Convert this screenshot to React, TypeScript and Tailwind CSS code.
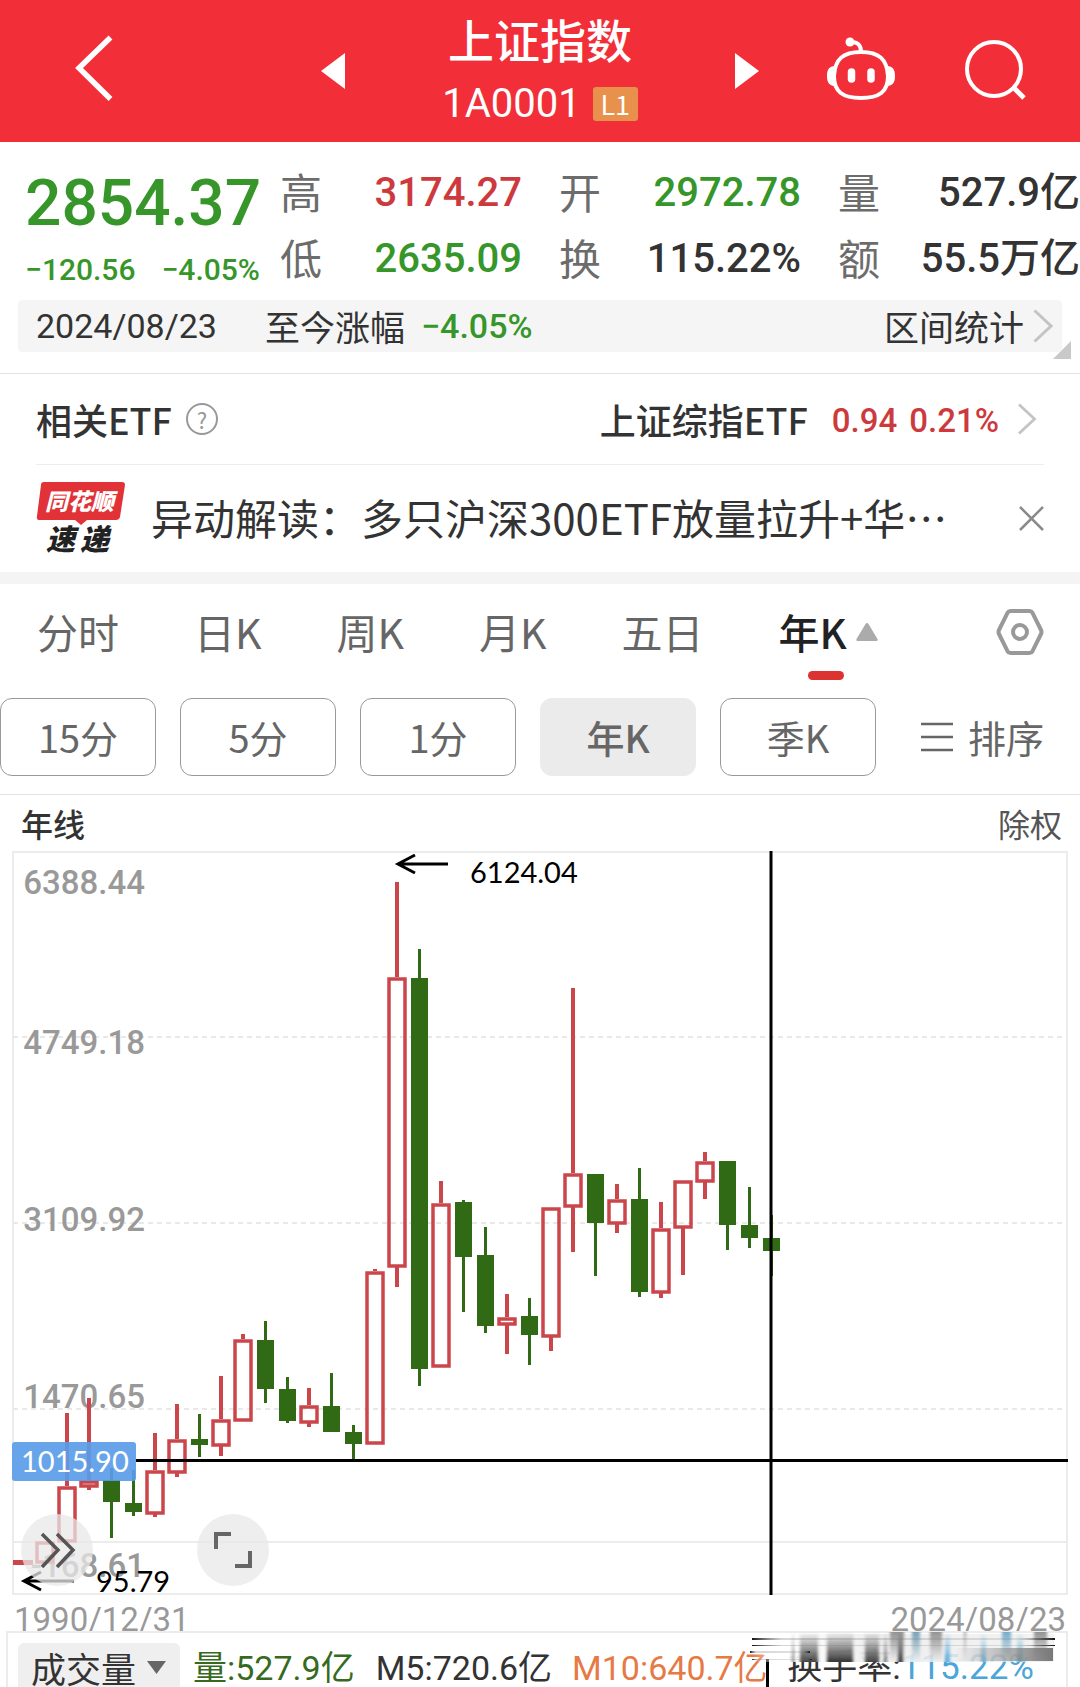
import React from 'react';

const CJK = "font-['Noto_Sans_CJK_SC',sans-serif]";
const NUM = "font-['Roboto','Noto_Sans_CJK_SC',sans-serif]";

type Candle = { up: boolean; high: number; top: number; bottom: number; low: number };

const up = (high: number, top: number, bottom: number, low: number): Candle => ({ up: true, high, top, bottom, low });
const down = (high: number, top: number, bottom: number, low: number): Candle => ({ up: false, high, top, bottom, low });

/* One candle per year, 1990 to 2024, in chart units. */
const candles: Candle[] = [
  up(1560, 1560, 1565, 1565),
  up(1541, 1541, 1563, 1563),
  up(1413, 1486, 1542, 1542),
  up(1398, 1480, 1487, 1490),
  down(1468, 1480, 1502, 1538),
  down(1470, 1503, 1512, 1516),
  up(1433, 1470, 1514, 1517),
  up(1404, 1439, 1473, 1477),
  down(1414, 1439, 1445, 1457),
  up(1376, 1419, 1446, 1456),
  up(1334, 1339, 1421, 1421),
  down(1321, 1340, 1389, 1403),
  down(1377, 1389, 1421, 1423),
  up(1388, 1405, 1423, 1427),
  down(1373, 1406, 1432, 1432),
  down(1425, 1432, 1444, 1459),
  up(1269, 1271, 1444, 1444),
  up(882, 977, 1267, 1287),
  down(949, 978, 1369, 1386),
  up(1181, 1203, 1367, 1367),
  down(1200, 1202, 1257, 1312),
  down(1227, 1255, 1326, 1333),
  up(1294, 1317, 1325, 1354),
  down(1298, 1316, 1335, 1365),
  up(1207, 1207, 1337, 1351),
  up(988, 1173, 1207, 1252),
  down(1174, 1174, 1223, 1276),
  up(1184, 1199, 1224, 1233),
  down(1168, 1199, 1292, 1297),
  up(1202, 1228, 1293, 1298),
  up(1180, 1180, 1228, 1275),
  up(1152, 1161, 1182, 1199),
  down(1161, 1161, 1225, 1250),
  down(1187, 1225, 1238, 1248),
  down(1215, 1238, 1251, 1276),
];

const RED = '#cb464b';
const GREEN = '#306a14';

function CandleShape({ candle, index }: { candle: Candle; index: number }) {
  const x = 23 + index * 22;
  const { high, top, bottom, low } = candle;
  if (!candle.up) {
    return (
      <g fill={GREEN}>
        <rect x={x - 1} y={high} width={3} height={low - high} />
        <rect x={x - 8} y={top} width={17} height={bottom - top} />
      </g>
    );
  }
  if (index === 0) return <rect x={13} y={top} width={20} height={bottom - top} fill={RED} />;
  return (
    <g>
      <rect x={x - 2} y={high} width={4} height={top - high} fill={RED} />
      <rect x={x - 2} y={bottom} width={4} height={low - bottom} fill={RED} />
      <rect
        x={x - 8}
        y={top + 2}
        width={16}
        height={Math.max(bottom - top - 3, 2)}
        fill="none"
        stroke={RED}
        strokeWidth={3.5}
      />
    </g>
  );
}

function Chevron({ className }: { className: string }) {
  return (
    <svg viewBox="0 0 20 34" className={className} fill="none" stroke="#c4c4c4" strokeWidth="3" aria-hidden="true">
      <path d="M1.5 1.5 18 17 1.5 32.5" />
    </svg>
  );
}

function Header() {
  return (
    <header className="relative flex h-[142px] items-center justify-center bg-[#f22f38] text-white">
      <button aria-label="返回" className="absolute top-[30px] left-[70px]">
        <svg width="48" height="74" viewBox="0 0 48 74" fill="none" stroke="#fff" strokeWidth="5.5">
          <path d="M40.500 7.500 9 38 40.500 69" />
        </svg>
      </button>
      <div className="flex items-center">
        <button aria-label="上一个">
          <svg width="24" height="36" viewBox="0 0 24 36" fill="#fff">
            <path d="M24 0v36L0 18z" />
          </svg>
        </button>
        <div className="flex w-[390px] flex-col items-center pt-px">
          <h1 className="text-[46px] leading-[60px] font-medium">上证指数</h1>
          <div className="mt-1 flex items-center gap-3">
            <span className={`${NUM} text-[40px] leading-[64px]`}>1A0001</span>
            <span className="flex h-[34px] w-[45px] items-center justify-center rounded-[3px] bg-[#e8914c] text-[27px] leading-[34px]">
              L1
            </span>
          </div>
        </div>
        <button aria-label="下一个">
          <svg width="24" height="36" viewBox="0 0 24 36" fill="#fff">
            <path d="M0 0v36l24-18z" />
          </svg>
        </button>
      </div>
      <div className="absolute top-[34px] right-[50px] flex gap-[66px]">
        <button aria-label="智能助手">
          <svg width="72" height="72" viewBox="0 0 72 72" fill="none" stroke="#fff" strokeWidth="4">
            <path d="M35 18c18 0 26 7 27 24 0 16-9 22-27 22S8 58 8 42c1-17 9-24 27-24z" />
            <path d="M35 18c0-7-3-10-10-10" />
            <circle cx="24" cy="8" r="4.500" fill="#fff" stroke="none" />
            <path d="M8 32c-6 1-7 5-7 10s1 9 7 10zM62 32c6 1 7 5 7 10s-1 9-7 10z" fill="#fff" stroke="none" />
            <path d="M25.500 38v7M45 38v7" strokeWidth="7.500" strokeLinecap="round" />
          </svg>
        </button>
        <button aria-label="搜索">
          <svg width="66" height="72" viewBox="0 0 66 72" fill="none" stroke="#fff" strokeWidth="4">
            <circle cx="30" cy="35" r="27" />
            <path d="M49 53 60 64" strokeWidth="5" />
          </svg>
        </button>
      </div>
    </header>
  );
}

const stats = [
  { label: '高', value: '3174.27', color: 'text-[#cd3a3d]' },
  { label: '开', value: '2972.78', color: 'text-[#36962a]' },
  { label: '量', value: '527.9亿', color: 'text-[#333]' },
  { label: '低', value: '2635.09', color: 'text-[#36962a]' },
  { label: '换', value: '115.22%', color: 'text-[#333]' },
  { label: '额', value: '55.5万亿', color: 'text-[#333]' },
];

function Quote() {
  return (
    <section className="border-b border-[#e2e2e2] pt-4 pb-[21px]">
      <div className="flex">
        <div className={`${NUM} w-[280px] shrink-0 pl-[25px] font-medium text-[#36962a]`}>
          <div className="text-[64px] leading-[92px]">2854.37</div>
          <div className="flex gap-[26px] text-[30px] leading-[40px] whitespace-nowrap">
            <span>−120.56</span>
            <span>−4.05%</span>
          </div>
        </div>
        <dl className="grid flex-1 grid-cols-3 gap-x-[37px]">
          {stats.map((s) => (
            <div key={s.label} className="flex h-[66px] items-center justify-between whitespace-nowrap">
              <dt className="text-[42px] leading-[62px] text-[#6c6c6c]">{s.label}</dt>
              <dd className={`${NUM} ${s.color} pt-1 text-[40px] leading-[66px] font-medium`}>{s.value}</dd>
            </div>
          ))}
        </dl>
      </div>
      <div className="relative mx-[18px] mt-[10px] flex h-[52px] items-center rounded bg-[#f5f5f5] px-[18px] text-[#333]">
        <span className={`${NUM} text-[34px]`}>2024/08/23</span>
        <span className="ml-[48px] text-[35px] leading-[48px]">至今涨幅</span>
        <span className={`${NUM} ml-4 text-[34px] font-medium text-[#36962a]`}>−4.05%</span>
        <button className="-mr-[9px] ml-auto flex items-center gap-[9px] text-[35px]">
          区间统计
          <Chevron className="h-[34px] w-5" />
        </button>
        <svg className="absolute -right-[9px] -bottom-[7px]" width="18" height="18" viewBox="0 0 18 18" fill="#c9c9c9" aria-hidden="true">
          <path d="M18 0v18H0z" />
        </svg>
      </div>
    </section>
  );
}

function NewsLogo() {
  return (
    <svg width="90" height="74" viewBox="0 0 90 74" className="shrink-0" role="img" aria-label="同花顺速递">
      <path d="M8 0h78q3 0 3 3l-5 32q-1 3-4 3H51l-6 5-6-5H4q-4 0-3-4L5 3q0-3 3-3z" fill="#e03237" />
      <text x="9" y="28" fontSize="23" fontWeight="900" fontStyle="italic" fill="#fff">
        同花顺
      </text>
      <text x="10" y="68" fontSize="29" fontWeight="900" fontStyle="italic" fill="#222">
        速
      </text>
      <text x="44" y="68" fontSize="29" fontWeight="900" fontStyle="italic" fill="#222">
        递
      </text>
    </svg>
  );
}

function Related() {
  return (
    <section className="px-9 text-[#333]">
      <div className="flex h-[91px] items-center border-b border-[#ededed] text-[36px] leading-[54px]">
        <span className="font-medium">相关ETF</span>
        <button
          aria-label="说明"
          className="ml-[14px] flex size-8 items-center justify-center rounded-full border-2 border-[#999] text-[22px] leading-none text-[#999]"
        >
          ?
        </button>
        <a href="#etf" className="mr-[7px] ml-auto flex items-center">
          <span className="font-medium">上证综指ETF</span>
          <span className={`${NUM} ml-6 flex gap-3 pt-1 text-[33px] font-medium text-[#cd3a3d]`}>
            <span>0.94</span>
            <span>0.21%</span>
          </span>
          <Chevron className="ml-[18px] h-8 w-5" />
        </a>
      </div>
      <div className="flex h-[107px] items-center">
        <NewsLogo />
        <a href="#news" className="ml-[25px] truncate pb-1 text-[42px] leading-[60px]">
          异动解读：多只沪深300ETF放量拉升+华⋯
        </a>
        <button aria-label="关闭" className="ml-auto">
          <svg width="25" height="25" viewBox="0 0 25 25" stroke="#8a8a8a" strokeWidth="2.500">
            <path d="M1 1 24 24M24 1 1 24" />
          </svg>
        </button>
      </div>
    </section>
  );
}

const tabs = ['分时', '日K', '周K', '月K', '五日'];

const periods = ['15分', '5分', '1分', '年K', '季K'];

function Periods() {
  return (
    <section className="border-y border-t-[12px] border-t-[#f4f4f4] border-b-[#e2e2e2] pb-[18px] text-[#666]">
      <nav className="relative flex h-[96px] items-center gap-[75px] pr-[36px] pl-[37px] text-[41px] whitespace-nowrap">
        {tabs.map((t) => (
          <button key={t}>{t}</button>
        ))}
        <button aria-current="page" className="relative flex h-full items-center gap-[9px] font-medium text-[#222]">
          年K
          <svg width="22" height="18" viewBox="0 0 22 18" fill="#ababab" aria-hidden="true">
            <path d="M9.500 1q1.500-2 3 0L21.500 16q.5 2-1 2h-19q-1.500 0-1-2z" />
          </svg>
          <span className="absolute bottom-0 left-[29px] h-[9px] w-9 rounded-full bg-[#dc3232]" />
        </button>
        <button aria-label="设置" className="ml-auto">
          <svg width="48" height="48" viewBox="0 0 48 48" fill="none" stroke="#999" strokeWidth="4" strokeLinejoin="round">
            <path d="M14.500 3h19q2 0 3 1.800L45 22q1 2 0 4l-8.500 17.200q-1 1.800-3 1.800h-19q-2 0-3-1.800L3 26q-1-2 0-4l8.500-17.200q1-1.800 3-1.800z" />
            <circle cx="24" cy="24" r="7" />
          </svg>
        </button>
      </nav>
      <div className="mt-[18px] flex gap-6 text-[38px] leading-[76px]">
        {periods.map((p) => (
          <button
            key={p}
            className={
              p === '年K'
                ? 'h-[78px] w-[156px] rounded-xl border border-[#ebebeb] bg-[#ebebeb] font-medium'
                : 'h-[78px] w-[156px] rounded-xl border border-[#999]'
            }
          >
            {p}
          </button>
        ))}
        <button className="mr-9 ml-auto flex items-center gap-[15px]">
          <svg width="32" height="30" viewBox="0 0 32 30" stroke="#666" strokeWidth="2.500" aria-hidden="true">
            <path d="M0 2h32M0 15h32M0 28h32" />
          </svg>
          排序
        </button>
      </div>
    </section>
  );
}

const gridLines = [1037, 1223, 1409];

const priceLabels = [
  { text: '6388.44', y: 894 },
  { text: '4749.18', y: 1054 },
  { text: '3109.92', y: 1231 },
  { text: '1470.65', y: 1408 },
  { text: '-168.61', y: 1577 },
];

function KChart() {
  return (
    <section className="px-3">
      <div className="flex h-14 items-center justify-between pr-[6px] pl-[9px] text-[32px] text-[#333]">
        <h2 className="font-medium">年线</h2>
        <button className="text-[#555]">除权</button>
      </div>
      <div className="relative">
        <svg viewBox="12 851 1056 744" className="block w-full" role="img" aria-label="上证指数年K线图">
          <rect x="13" y="852" width="1054" height="742" fill="none" stroke="#ececec" strokeWidth="2" />
          {gridLines.map((y) => (
            <path key={y} d={`M13 ${y}H1067`} stroke="#e8e8e8" strokeWidth="2" strokeDasharray="5 4" />
          ))}
          <path d="M13 1542H1067" stroke="#ececec" strokeWidth="2" />
          <g className={NUM} fontSize="33" fontWeight="500" fill="#999" textAnchor="end">
            {priceLabels.map((l) => (
              <text key={l.text} x="145" y={l.y}>
                {l.text}
              </text>
            ))}
          </g>
          {candles.map((c, i) => (
            <CandleShape key={i} candle={c} index={i} />
          ))}
          <path d="M136 1460.500H1068M771 851V1595" stroke="#000" strokeWidth="3" />
          <rect x="12" y="1442" width="124" height="39" rx="3" fill="#5a9ce8" fillOpacity="0.92" />
          <g className="font-['Lato',sans-serif]" fontSize="29">
            <text x="21" y="1472" fill="#fff">
              1015.90
            </text>
            <text x="470" y="883">
              6124.04
            </text>
            <text x="96" y="1592">
              95.79
            </text>
          </g>
          <path
            d="M448 864H399M415 855 398 864 415 873M74 1581H25M41 1572 24 1581 41 1590"
            fill="none"
            stroke="#000"
            strokeWidth="3"
          />
        </svg>
        <div className="absolute bottom-[9px] left-[9px] flex gap-[104px]">
          <button aria-label="展开" className="size-[72px] rounded-full bg-[#e8e8e8]/75">
            <svg viewBox="0 0 72 72" fill="none" stroke="#555" strokeWidth="3.5">
              <path d="M21 20 37 36 21 53M36 20 52 36 36 53" />
            </svg>
          </button>
          <button aria-label="全屏" className="size-[72px] rounded-full bg-[#e8e8e8]/75">
            <svg viewBox="0 0 72 72" fill="none" stroke="#666" strokeWidth="4">
              <path d="M19 35V20H34M53 37V52H38" />
            </svg>
          </button>
        </div>
      </div>
      <div className={`${NUM} flex h-9 justify-between px-[2px] text-[33px] leading-[50px] text-[#999]`}>
        <span>1990/12/31</span>
        <span>2024/08/23</span>
      </div>
    </section>
  );
}

/* Vertical streaks over the turnover figure: x, width, colour, dark end. */
const streaks: [number, number, string, 'top' | 'bottom'][] = [
  [46, 2, '#666', 'bottom'],
  [54, 18, '#333', 'bottom'],
  [81, 26, '#222', 'bottom'],
  [119, 14, '#333', 'bottom'],
  [138, 3, '#666', 'bottom'],
  [144, 14, '#888', 'top'],
  [152, 5, '#222', 'bottom'],
  [166, 8, '#6898b0', 'top'],
  [184, 12, '#888', 'top'],
  [199, 5, '#4aa5d8', 'bottom'],
  [218, 2, '#999', 'top'],
  [235, 5, '#68b4dc', 'bottom'],
  [256, 9, '#68a4c4', 'top'],
  [271, 6, '#68b4c4', 'bottom'],
  [288, 13, '#888', 'top'],
];

function Streaks() {
  return (
    <svg className="absolute -top-[2px] right-[10px]" width="310" height="34" viewBox="0 0 310 34" aria-hidden="true">
      <defs>
        <linearGradient id="veil" x1="0" x2="1">
          <stop offset="0" stopColor="#fff" stopOpacity="0" />
          <stop offset="0.12" stopColor="#fff" stopOpacity="0.95" />
          <stop offset="0.4" stopColor="#eee" stopOpacity="0.95" />
          <stop offset="1" stopColor="#eee" stopOpacity="0.7" />
        </linearGradient>
        <linearGradient id="dark" x1="0" x2="1">
          <stop offset="0" stopColor="#111" />
          <stop offset="0.1" stopColor="#777" stopOpacity="0.3" />
          <stop offset="0.88" stopColor="#777" stopOpacity="0.2" />
          <stop offset="1" stopColor="#111" />
        </linearGradient>
        <linearGradient id="shade" x1="0" x2="1">
          <stop offset="0" stopColor="#888" stopOpacity="0" />
          <stop offset="1" stopColor="#777" />
        </linearGradient>
        <filter id="smear">
          <feGaussianBlur stdDeviation="1.5 0" />
        </filter>
        {streaks.map(([x, , color, end]) => (
          <linearGradient key={x} id={`streak${x}`} x1="0" x2="0" y1={end === 'top' ? '1' : '0'} y2={end === 'top' ? '0' : '1'}>
            <stop offset="0" stopColor={color} stopOpacity="0" />
            <stop offset="1" stopColor={color} stopOpacity="0.9" />
          </linearGradient>
        ))}
      </defs>
      <rect x="6" y="3" width="302" height="28" fill="url(#veil)" />
      <g filter="url(#smear)">
        {streaks.map(([x, w]) => (
          <rect key={x} x={x} y="1" width={w} height="30" fill={`url(#streak${x})`} />
        ))}
      </g>
      <rect x="208" y="17" width="99" height="13" fill="url(#shade)" />
      <g fill="url(#dark)">
        <rect x="6" y="7" width="303" height="2" />
        <rect x="6" y="14" width="303" height="1" />
        <rect x="4" y="20" width="60" height="2" />
        <rect x="6" y="28" width="60" height="1" />
      </g>
    </svg>
  );
}

function Volume() {
  return (
    <section className="relative mr-3 ml-[6px] flex h-14 border-2 border-b-0 border-[#ececec] pt-[10px] pl-[10px] text-[34px] leading-[50px] whitespace-nowrap">
      <div className="relative h-11 w-[162px] overflow-hidden rounded-t-md bg-[#efefef]">
        <select
          aria-label="副图指标"
          defaultValue="成交量"
          className="h-[50px] w-full appearance-none bg-transparent pl-[13px] text-[35px] leading-[50px] text-[#333]"
        >
          <option>成交量</option>
        </select>
        <svg className="pointer-events-none absolute top-[18px] right-[14px]" width="19" height="13" viewBox="0 0 19 13" fill="#666" aria-hidden="true">
          <path d="M0 0h19L9.500 13z" />
        </svg>
      </div>
      <div className={`${NUM} flex h-11 flex-1 overflow-hidden`}>
        <span className="ml-[13px] text-[#376a1f]">量:527.9亿</span>
        <span className="ml-[21px] text-[#333]">M5:720.6亿</span>
        <span className="ml-5 text-[#e67a45]">M10:640.7亿</span>
        <span className="mt-4 -ml-[2px] h-7 w-[3px] bg-black" />
        <span className="mr-[32px] ml-auto text-[35px] text-[#333]">
          换手率:<span className="text-[#4aa5d8]">115.22%</span>
        </span>
      </div>
      <Streaks />
    </section>
  );
}

export default function App() {
  return (
    <main className={`${CJK} w-full overflow-x-hidden bg-white`}>
      <Header />
      <Quote />
      <Related />
      <Periods />
      <KChart />
      <Volume />
    </main>
  );
}
